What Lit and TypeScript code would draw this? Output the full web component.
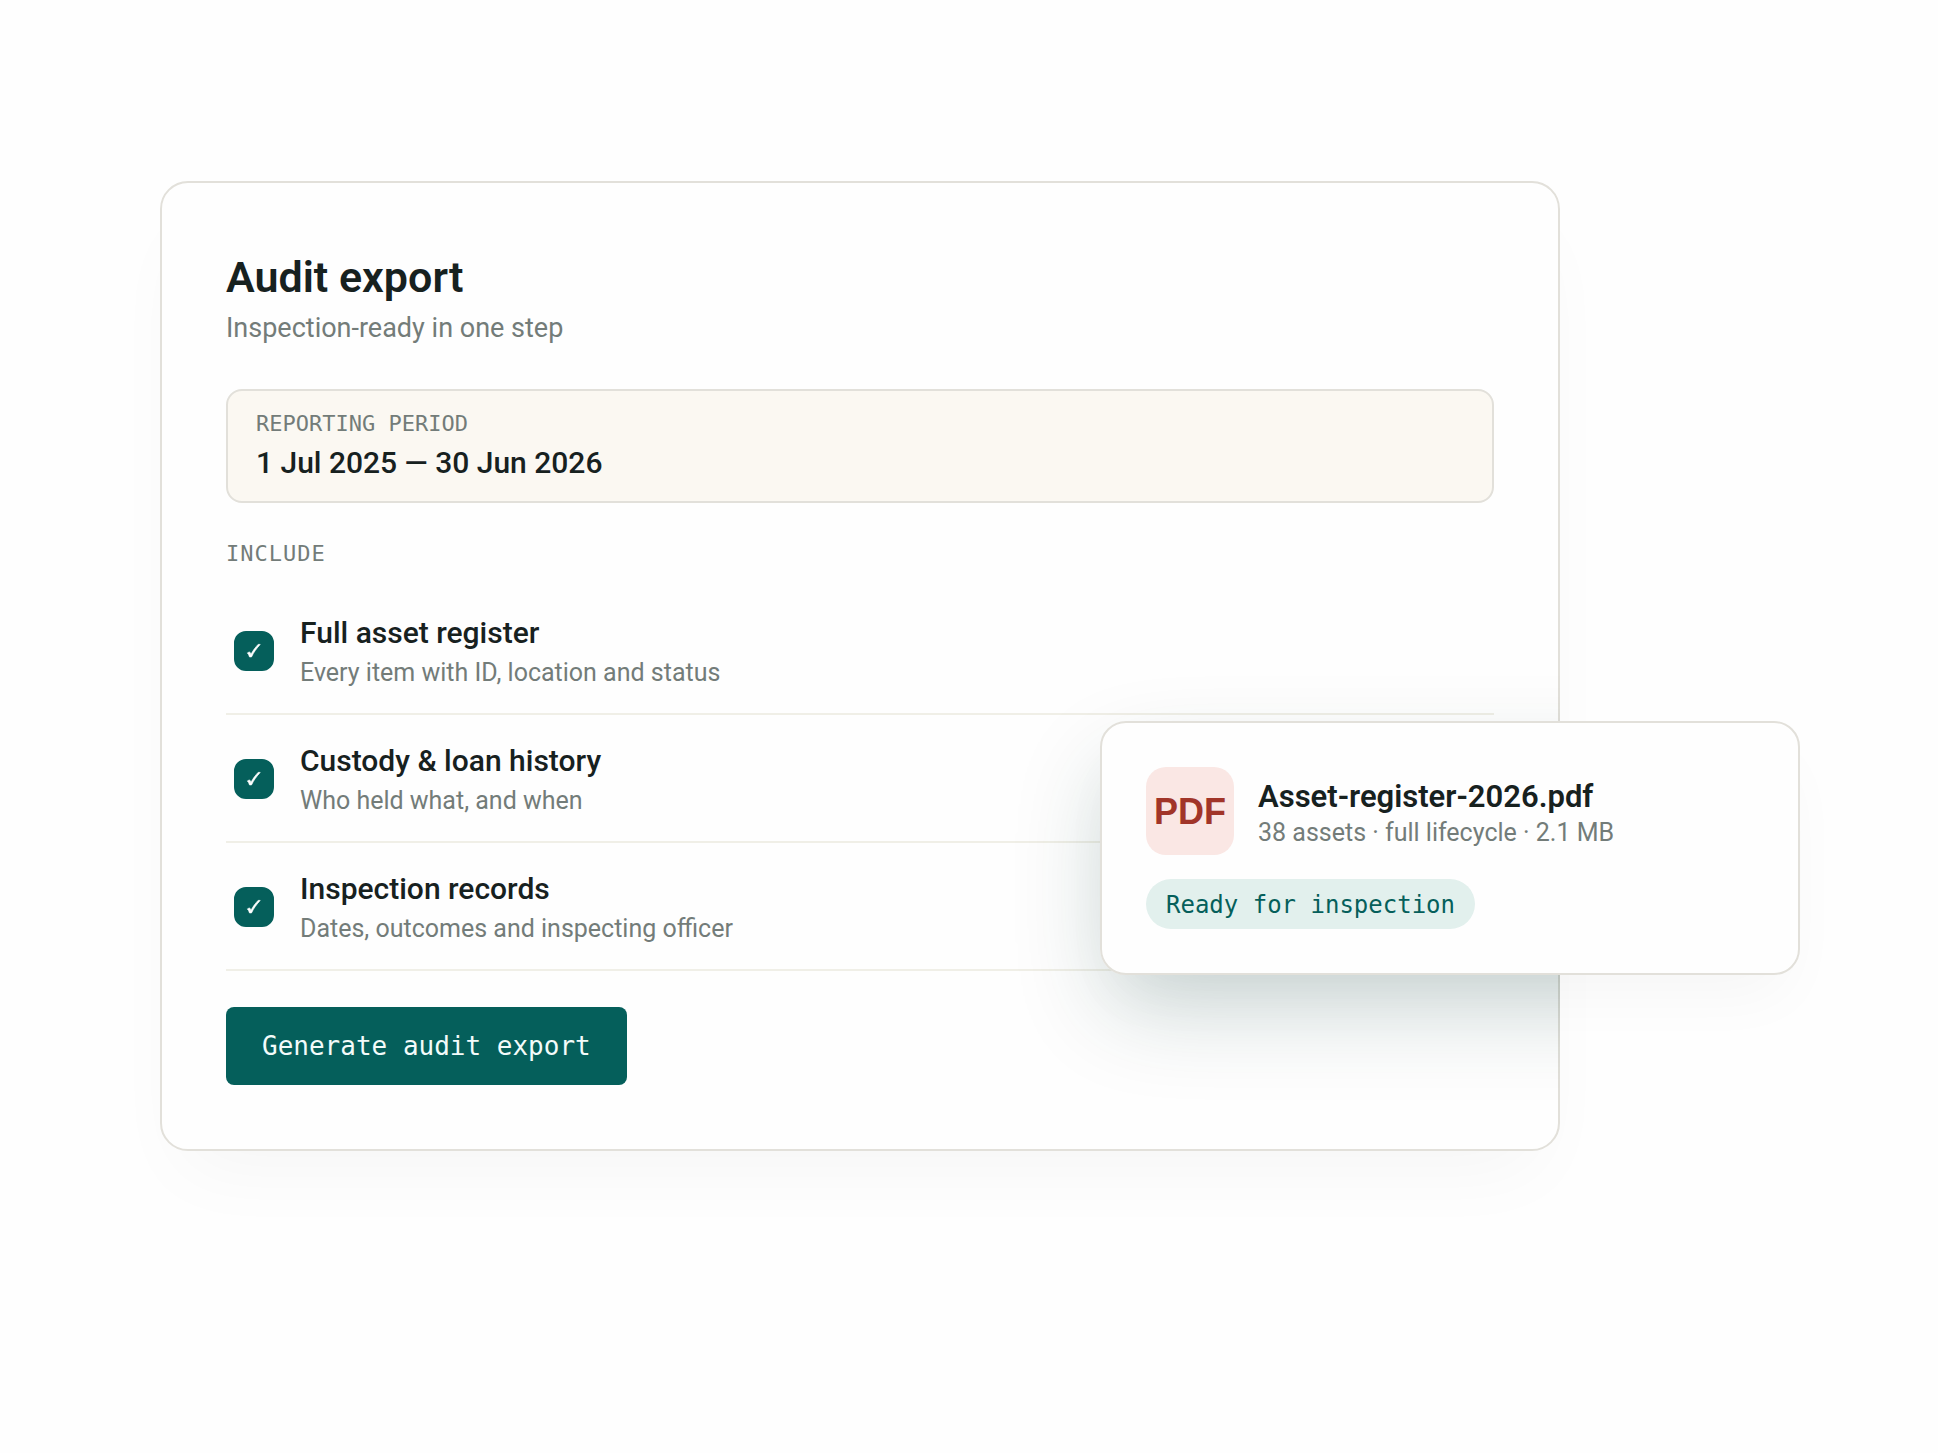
import { LitElement, html, css } from "lit";
import { customElement, property, state } from "lit/decorators.js";

interface ExportSection {
  id: string;
  title: string;
  note: string;
  included: boolean;
}

/** One selectable section of the audit export. */
@customElement("export-option")
class ExportOption extends LitElement {
  @property({ attribute: false }) section!: ExportSection;

  static styles = css`
    :host {
      display: block;
      border-bottom: 2px solid #f0efe7;
    }
    .row {
      display: flex;
      align-items: center;
      gap: 26px;
      padding: 26px 8px 24px;
      cursor: pointer;
    }
    .tick {
      display: grid;
      flex: none;
      place-items: center;
    }
    .box,
    .mark {
      grid-area: 1 / 1;
    }
    .box {
      appearance: none;
      width: 40px;
      height: 40px;
      margin: 0;
      border: 2px solid #055f5b;
      border-radius: 12px;
      background: #fefefe;
      cursor: pointer;
    }
    .box:checked {
      background: #055f5b;
    }
    .mark {
      width: 40px;
      height: 40px;
      fill: #ffffff;
      stroke: #ffffff;
      stroke-width: 0.7;
      pointer-events: none;
      visibility: hidden;
    }
    .box:checked + .mark {
      visibility: visible;
    }
    .text {
      display: flex;
      flex-direction: column;
      gap: 4px;
      min-width: 0;
    }
    .title {
      font-size: 30px;
      font-weight: 500;
      line-height: 40px;
      color: #17211f;
    }
    .note {
      font-size: 25px;
      line-height: 32px;
      color: #737c79;
    }
  `;

  render() {
    const { id, title, note, included } = this.section;
    return html`
      <label class="row" for=${id}>
        <span class="tick">
          <input class="box" type="checkbox" id=${id} .checked=${included} />
          <svg class="mark" viewBox="0 0 40 40" aria-hidden="true">
            <path
              d="M13.4 21.9 L15.5 20.9 C16.2 21.5 16.6 22.4 16.9 23.4 C19 19.5 21.6 16.2 24.1 13.4 L26.2 13.4 C22.8 17.2 19.6 21.3 17.5 25.9 L15.5 25.9 C15.1 24.3 14.4 22.9 13.4 21.9 Z"
            />
          </svg>
        </span>
        <span class="text">
          <span class="title">${title}</span>
          <span class="note">${note}</span>
        </span>
      </label>
    `;
  }
}

@customElement("app-root")
class AppRoot extends LitElement {
  @state() private sections: ExportSection[] = [
    {
      id: "register",
      title: "Full asset register",
      note: "Every item with ID, location and status",
      included: true,
    },
    {
      id: "custody",
      title: "Custody & loan history",
      note: "Who held what, and when",
      included: true,
    },
    {
      id: "records",
      title: "Inspection records",
      note: "Dates, outcomes and inspecting officer",
      included: true,
    },
  ];

  static styles = css`
    :host {
      display: block;
      box-sizing: border-box;
      min-height: 100vh;
      padding: 181px 378px 181px 160px;
      background: #fefefe;
      color: #17211f;
      font-family: Roboto, "Liberation Sans", sans-serif;
    }
    .panel {
      position: relative;
      padding: 64px;
      border: 2px solid #e2e0da;
      border-radius: 28px;
      background: #fefefe;
      box-shadow: 0 40px 80px -24px rgba(0, 0, 0, 0.04);
    }
    .heading {
      margin: 0;
      font-size: 43px;
      font-weight: 600;
      line-height: 60px;
    }
    .lead {
      margin: 4px 0 0;
      font-size: 27px;
      line-height: 34px;
      color: #737c79;
    }
    .period {
      display: flex;
      flex-direction: column;
      gap: 4px;
      margin-top: 44px;
      padding: 20px 28px 16px;
      border: 2px solid #e2e0da;
      border-radius: 16px;
      background: #fbf8f2;
    }
    .caption {
      font-family: "DejaVu Sans Mono", monospace;
      font-size: 22px;
      line-height: 26px;
      color: #737c79;
    }
    .dates {
      font-size: 30px;
      font-weight: 500;
      line-height: 44px;
    }
    .sections {
      min-width: 0;
      margin: 36px 0 0;
      padding: 0;
      border: 0;
    }
    .legend {
      margin-bottom: 18px;
      padding: 0;
      font-family: "DejaVu Sans Mono", monospace;
      font-size: 22px;
      letter-spacing: 1px;
      line-height: 30px;
      color: #737c79;
    }
    .generate {
      display: block;
      height: 78px;
      margin: 36px 0 0;
      padding: 0 36px;
      border: 0;
      border-radius: 8px;
      background: #055f5b;
      color: #f3fbfa;
      font-family: "DejaVu Sans Mono", monospace;
      font-size: 26px;
      cursor: pointer;
    }
    /* The stronger tint of the result shadow stays on the panel surface. */
    .surface {
      position: absolute;
      inset: -2px;
      overflow: hidden;
      border-radius: 28px;
      pointer-events: none;
    }
    .shade,
    .result {
      position: absolute;
      box-sizing: border-box;
      width: 700px;
      height: 254px;
      border-radius: 26px;
    }
    .shade {
      top: 540px;
      right: -240px;
      box-shadow: 0 40px 96px -8px rgba(4, 62, 56, 0.2);
    }
    .result {
      top: 538px;
      right: -242px;
      display: flex;
      flex-direction: column;
      align-items: flex-start;
      gap: 24px;
      padding: 44px;
      border: 2px solid #e2e0da;
      background: #fefefe;
      box-shadow: 0 32px 64px -16px rgba(0, 0, 0, 0.04);
    }
    .file {
      display: flex;
      align-items: center;
      gap: 24px;
    }
    .kind {
      display: grid;
      flex: none;
      place-items: center;
      box-sizing: border-box;
      width: 88px;
      height: 88px;
      padding-top: 2px;
      border-radius: 20px;
      background: #fae7e4;
      color: #a13529;
      font-family: "Liberation Sans", sans-serif;
      font-size: 36px;
      font-weight: 700;
    }
    .details {
      padding-top: 6px;
    }
    .name {
      font-size: 31px;
      font-weight: 600;
      line-height: 38px;
    }
    .meta {
      font-size: 25px;
      line-height: 34px;
      color: #737c79;
    }
    .status {
      padding: 2px 20px 0;
      border-radius: 25px;
      background: #e2f0ed;
      color: #055f5b;
      font-family: "DejaVu Sans Mono", monospace;
      font-size: 24px;
      line-height: 48px;
    }
  `;

  render() {
    return html`
      <main class="panel">
        <h1 class="heading">Audit export</h1>
        <p class="lead">Inspection-ready in one step</p>
        <div class="period">
          <span class="caption">REPORTING PERIOD</span>
          <span class="dates">1 Jul 2025 — 30 Jun 2026</span>
        </div>
        <fieldset class="sections">
          <legend class="legend">INCLUDE</legend>
          ${this.sections.map(
            (section) => html`<export-option .section=${section}></export-option>`
          )}
        </fieldset>
        <button class="generate" type="button">Generate audit export</button>
        <div class="surface"><div class="shade"></div></div>
        <aside class="result">
          <div class="file">
            <div class="kind">PDF</div>
            <div class="details">
              <div class="name">Asset-register-2026.pdf</div>
              <div class="meta">38 assets · full lifecycle · 2.1 MB</div>
            </div>
          </div>
          <div class="status">Ready for inspection</div>
        </aside>
      </main>
    `;
  }
}
